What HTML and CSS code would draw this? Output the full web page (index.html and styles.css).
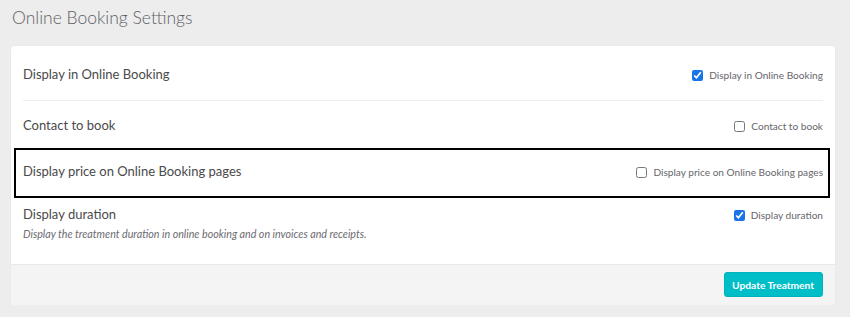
FILE: index.html
```html
<!DOCTYPE html>
<html>
<head>
<meta charset="utf-8">
<link rel="stylesheet" href="styles.css">
</head>
<body>
<div class="page">
  <h1 class="title">Online Booking Settings</h1>
  <div class="card">
    <div class="body">
      <div class="row sep">
        <div class="label">Display in Online Booking</div>
        <label class="check"><input type="checkbox" checked> Display in Online Booking</label>
      </div>
      <div class="row">
        <div class="label">Contact to book</div>
        <label class="check"><input type="checkbox"> Contact to book</label>
      </div>
      <div class="row highlight">
        <div class="label">Display price on Online Booking pages</div>
        <label class="check"><input type="checkbox"> Display price on Online Booking pages</label>
      </div>
      <div class="row last">
        <div>
          <div class="label">Display duration</div>
          <div class="desc">Display the treatment duration in online booking and on invoices and receipts.</div>
        </div>
        <label class="check"><input type="checkbox" checked> Display duration</label>
      </div>
    </div>
    <div class="footer">
      <button class="btn">Update Treatment</button>
    </div>
  </div>
</div>
</body>
</html>
```
FILE: styles.css
```css
html, body {
  margin: 0;
  padding: 0;
  background: #ededed;
  font-family: Lato, "Open Sans", sans-serif;
  color: #4a4a4a;
}
.page {
  padding: 6px 15px 0 11px;
}
.title {
  margin: 0 0 0 1px;
  font-weight: 300;
  font-size: 17.5px;
  line-height: 24px;
  color: #606066;
  height: 40px;
}
.card {
  background: #fff;
  border-radius: 3px;
  box-shadow: 0 0 1px rgba(0,0,0,0.12);
  overflow: hidden;
}
.body {
  padding: 0 12px;
}
.row {
  display: flex;
  justify-content: space-between;
  align-items: flex-start;
}
.row.sep {
  height: 55px;
  padding-top: 20px;
  box-sizing: border-box;
  border-bottom: 1px solid #eeeeee;
}
.row:nth-child(2) {
  height: 47px;
  padding-top: 16px;
  box-sizing: border-box;
}
.row.highlight {
  margin: 0 -7px 0 -9px;
  padding: 13px 5px 0 7px;
  height: 50px;
  box-sizing: border-box;
  border: 2px solid #000;
}
.row.last {
  padding-top: 8px;
  height: 66px;
  box-sizing: border-box;
}
.label {
  font-size: 13px;
  line-height: 16px;
  color: #4a4a4a;
}
.desc {
  font-size: 10.7px;
  font-style: italic;
  color: #6b6b70;
  margin-top: 5px;
}
.check {
  display: flex;
  align-items: center;
  gap: 6px;
  font-size: 10.1px;
  line-height: 14px;
  color: #66666c;
  padding-top: 2px;
}
.check input {
  margin: 0;
  width: 11px;
  height: 11px;
  accent-color: #1a73e8;
}
.footer {
  background: #f4f4f4;
  border-top: 1px solid #e8e8e8;
  display: flex;
  justify-content: flex-end;
  padding: 7px 12px 8px;
}
.btn {
  background: #00bec8;
  color: #fff;
  border: 1px solid #00b4be;
  border-radius: 3px;
  font-family: Lato, sans-serif;
  font-size: 10.2px;
  font-weight: 700;
  height: 25px;
  padding: 0 8px 0 7px;
  cursor: pointer;
}
```
